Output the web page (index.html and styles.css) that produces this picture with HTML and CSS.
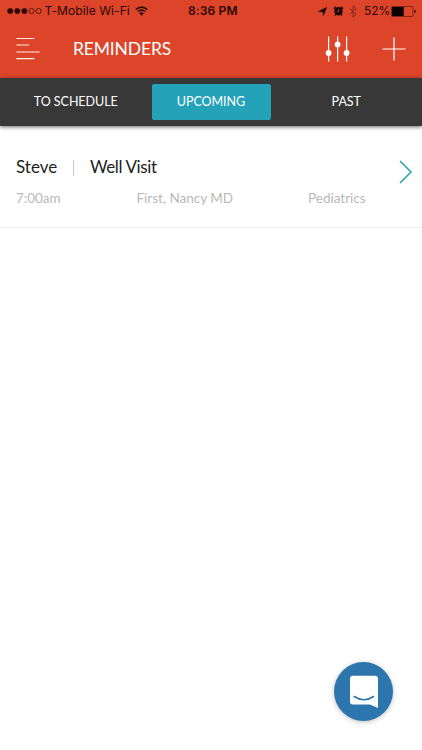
FILE: index.html
```html
<!DOCTYPE html>
<html lang="en">
<head>
<meta charset="utf-8">
<title>Reminders</title>
<link rel="stylesheet" href="styles.css">
</head>
<body>
<div class="app">
  <header class="header">
    <div class="status">
      <div class="carrier">
        <svg class="signal" width="36" height="8" viewBox="0 0 36 8"><g stroke="#2a0702" stroke-width=".7"><circle cx="3.2" cy="4" r="2.6" fill="#2a0702"/><circle cx="10.3" cy="4" r="2.6" fill="#2a0702"/><circle cx="17.4" cy="4" r="2.6" fill="#2a0702"/><circle cx="24.5" cy="4" r="2.6" fill="none"/><circle cx="31.6" cy="4" r="2.6" fill="none"/></g></svg>
        <span class="network">T-Mobile Wi-Fi</span>
        <svg width="13" height="10" viewBox="0 0 13 10" fill="none" stroke="#2a0702" stroke-width="1.5"><path d="M.8 3.6Q6.5-1.4 12.2 3.6M2.8 5.8Q6.5 2.4 10.2 5.8"/><path d="M4.2 7.3Q6.5 5.2 8.8 7.3L6.5 9.7Z" fill="#2a0702" stroke="none"/></svg>
      </div>
      <span class="clock">8:36 PM</span>
      <div class="indicators">
        <svg width="9" height="9" viewBox="0 0 9 9"><path d="M8.8.2 5.4 8.800 4.700 4.700.2 4.500Z" fill="#1c0401" stroke="#1c0401" stroke-width=".4"/></svg>
        <svg class="alarm" width="11" height="10" viewBox="0 0 11 10"><circle cx="5.5" cy="5.3" r="4.2" fill="#1c0401"/><path d="M.9 2.7 3 .8M8 .8l2.1 1.9M2.700 8.400 2 9.500M8.300 8.400l.7 1.100" stroke="#1c0401" stroke-width="1.3"/><path d="M5.500 3.200v2.300H4" fill="none" stroke="#dd452b" stroke-width=".8"/></svg>
        <svg class="bluetooth" width="8" height="13" viewBox="0 0 8 13" fill="none" stroke="#83291a" stroke-width="1"><path d="M.6 3.500 7.200 9.300 4 12.300V.7L7.200 3.700.6 9.500"/></svg>
        <span class="percent">52%</span>
        <svg class="battery" width="25" height="11" viewBox="0 0 25 11"><rect x=".5" y=".5" width="21.5" height="10" rx="1" fill="none" stroke="#5c160b" stroke-width=".7"/><rect x="1" y="1" width="11.7" height="9" fill="#0b0100"/><path d="M23.3 3.8q1.4.2 1.4 1.7t-1.4 1.7z" fill="#2a0702"/></svg>
      </div>
    </div>
    <div class="toolbar">
      <svg width="24" height="24" viewBox="0 0 24 24" stroke="#ffe9e3" stroke-width="1.2"><path d="M.3 1.500h18M.3 8h13M.3 15h23.400M.3 21.700h18"/></svg>
      <h1 class="title">REMINDERS</h1>
      <svg class="filter" width="25" height="26" viewBox="0 0 25 26" stroke="#fff" stroke-width="1.2"><path d="M3.6.5v25M12.6.5v25M21.6.5v25"/><g fill="#fff" stroke="none"><circle cx="3.6" cy="17" r="2.9"/><circle cx="12.6" cy="8.400" r="2.900"/><circle cx="21.600" cy="17" r="2.900"/></g></svg>
      <svg class="add" width="24" height="24" viewBox="0 0 24 24" stroke="#fff" stroke-width="1.2"><path d="M.5 12h23M12 .5v23"/></svg>
    </div>
  </header>
  <nav class="tabs">
    <span class="tab schedule">TO SCHEDULE</span>
    <span class="tab active">UPCOMING</span>
    <span class="tab past">PAST</span>
  </nav>
  <main class="list">
    <article class="item">
      <div class="heading"><span class="person">Steve</span><i class="divider"></i><span class="visit">Well Visit</span></div>
      <div class="details"><span class="time">7:00am</span><span class="doctor">First, Nancy MD</span><span class="specialty">Pediatrics</span></div>
      <svg class="chevron" width="14" height="24" viewBox="0 0 14 24" fill="none" stroke="#279fb4" stroke-width="1.5"><path d="M1 1 12 12 1 23"/></svg>
    </article>
  </main>
  <div class="chat">
    <svg width="30" height="34" viewBox="0 0 30 34"><path d="M4 .7h22Q29 .7 29 3.700V33l-8-3.400H4Q1 29.600 1 26.600V3.700Q1 .7 4 .7Z" fill="#fff"/><path d="M5.200 21.500Q15 28 24.500 21.500" fill="none" stroke="#2d76ad" stroke-width="1.600" stroke-linecap="round"/></svg>
  </div>
</div>
</body>
</html>
```
FILE: styles.css
```css
* { box-sizing: border-box; }
body { margin: 0; background: #fff; font-family: Lato, sans-serif; }
svg { display: block; flex: none; }
span, h1 { white-space: nowrap; }
.app { width: 422px; height: 750px; overflow: hidden; }
.header { height: 78px; background: #dd452b; }
.status { height: 22px; display: grid; grid-template-columns: 181px 1fr auto; align-items: center; padding: 0 6px 0 7px; font: 12px/22px Inter, sans-serif; color: #2a0702; }
.carrier { display: flex; align-items: center; }
.network { width: 85px; margin: 0 5px 0 1.500px; letter-spacing: .08px; }
.clock { font-weight: 600; letter-spacing: .15px; }
.indicators { display: flex; align-items: center; }
.alarm { margin-left: 6px; }
.bluetooth { margin-left: 5px; }
.percent { width: 25px; margin: 0 2px 0 7px; letter-spacing: -.1px; }
.toolbar { height: 54px; display: flex; align-items: center; padding: 0 16px; }
.title { width: 98px; margin: 0 154px 0 33px; font-size: 17.500px; line-height: 24px; font-weight: 400; letter-spacing: -.15px; color: #fff; }
.add { margin-left: auto; }
.tabs { position: relative; height: 48px; display: grid; grid-template-columns: 151.500px 119px 151.500px; padding-top: 6px; background: #383838; box-shadow: 0 1px 4px rgba(0,0,0,.6); }
.tab { height: 36px; font-size: 12.500px; line-height: 35px; text-align: center; letter-spacing: -.05px; color: #fff; }
.active { border-radius: 2px; background: #24a2b8; }
.item { position: relative; height: 102px; border-bottom: 1px solid #eee; padding: 29px 16px 0; }
.heading { height: 24px; display: flex; align-items: center; font-size: 17px; line-height: 24px; color: #222; }
.person { width: 57px; }
.divider { width: 1px; height: 16px; margin-top: 2px; background: #c8c8c8; }
.visit { margin-left: 16px; letter-spacing: -.38px; }
.details { display: grid; grid-template-columns: 120.500px 171.500px 1fr; margin-top: 9px; font-size: 13.500px; line-height: 20px; color: #b9b9b9; }
.chevron { position: absolute; right: 9px; top: 34px; }
.chat { position: absolute; left: 334px; top: 662px; width: 59px; height: 59px; display: flex; align-items: center; justify-content: center; border-radius: 50%; background: #2d76ad; box-shadow: 0 1px 5px rgba(0,0,0,.25); }
```
